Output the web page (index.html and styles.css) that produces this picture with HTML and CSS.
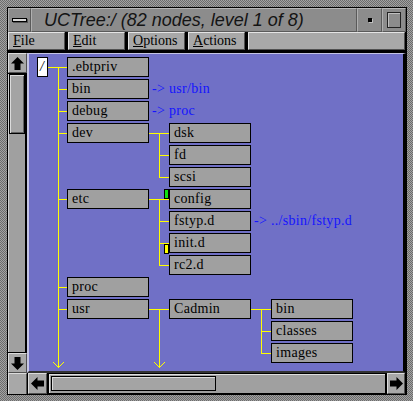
FILE: index.html
```html
<!DOCTYPE html>
<html>
<head>
  <title>UCTree</title>
  <link rel="stylesheet" href="styles.css">
</head>
<body>
  <div class="window">
    <div class="inner">

      <div class="titlebar">
        <div class="tb-btn tb-menu"><span class="bar"></span></div>
        <div class="tb-title">UCTree:/ (82 nodes, level 1 of 8)</div>
        <div class="tb-btn tb-min"><span class="dot"></span></div>
        <div class="tb-btn tb-max"><span class="sq"></span></div>
      </div>

      <div class="menubar">
        <div class="menu"><u>F</u>ile</div>
        <div class="menu"><u>E</u>dit</div>
        <div class="menu"><u>O</u>ptions</div>
        <div class="menu"><u>A</u>ctions</div>
        <div class="menu menu-fill"></div>
      </div>

      <div class="main">
        <div class="vscroll">
          <div class="arrow-btn">
            <svg width="13" height="13" viewBox="0 0 13 13"><path d="M6.5 0 L13 6.5 L9.5 6.5 L9.5 13 L3.5 13 L3.5 6.5 L0 6.5 Z" fill="#000"/></svg>
          </div>
          <div class="vtrough"><div class="vthumb"></div></div>
          <div class="arrow-btn">
            <svg width="13" height="13" viewBox="0 0 13 13"><path d="M6.5 13 L13 6.5 L9.5 6.5 L9.5 0 L3.5 0 L3.5 6.5 L0 6.5 Z" fill="#000"/></svg>
          </div>
        </div>

        <div class="canvas">
          <svg class="lines" width="374" height="317" viewBox="0 0 374 317">
            <g stroke="#ffff00" stroke-width="1" fill="none" shape-rendering="crispEdges">
              <!-- root -->
              <path d="M18 13.5 H29.5 M29.5 13 V314"/>
              <path d="M29.5 13.5 H38 M29.5 35.5 H38 M29.5 57.5 H38 M29.5 79.5 H38 M29.5 145.5 H38 M29.5 233.5 H38 M29.5 255.5 H38"/>
              <path d="M24 308 L29.5 313.5 L35 308" shape-rendering="auto"/>
              <!-- dev -->
              <path d="M120 79.5 H140 M130.5 79 V124 M130.5 101.5 H140 M130.5 123.5 H140"/>
              <!-- etc -->
              <path d="M120 145.5 H140 M130.5 145 V212 M130.5 167.5 H140 M130.5 189.5 H140 M130.5 211.5 H140"/>
              <!-- usr -->
              <path d="M120 255.5 H140 M130.5 255 V314"/>
              <path d="M125 308 L130.5 313.5 L136 308" shape-rendering="auto"/>
              <!-- Cadmin -->
              <path d="M222 255.5 H242 M232.5 255 V300 M232.5 277.5 H242 M232.5 299.5 H242"/>
            </g>
          </svg>

          <div class="node root" style="left:8px;top:3px">/</div>

          <div class="node" style="left:38px;top:3px">.ebtpriv</div>
          <div class="node" style="left:38px;top:25px">bin</div>
          <div class="node" style="left:38px;top:47px">debug</div>
          <div class="node" style="left:38px;top:69px">dev</div>
          <div class="node" style="left:38px;top:135px">etc</div>
          <div class="node" style="left:38px;top:223px">proc</div>
          <div class="node" style="left:38px;top:245px">usr</div>

          <div class="node" style="left:140px;top:69px">dsk</div>
          <div class="node" style="left:140px;top:91px">fd</div>
          <div class="node" style="left:140px;top:113px">scsi</div>
          <div class="node" style="left:140px;top:135px">config</div>
          <div class="node" style="left:140px;top:157px">fstyp.d</div>
          <div class="node" style="left:140px;top:179px">init.d</div>
          <div class="node" style="left:140px;top:201px">rc2.d</div>
          <div class="node" style="left:140px;top:245px">Cadmin</div>

          <div class="node" style="left:242px;top:245px">bin</div>
          <div class="node" style="left:242px;top:267px">classes</div>
          <div class="node" style="left:242px;top:289px">images</div>

          <div class="link" style="left:123px;top:25px">-&gt; usr/bin</div>
          <div class="link" style="left:123px;top:47px">-&gt; proc</div>
          <div class="link" style="left:225px;top:157px">-&gt; ../sbin/fstyp.d</div>

          <div class="marker green" style="left:135px;top:135px"></div>
          <div class="marker yellow" style="left:135px;top:190px"></div>
        </div>
      </div>

      <div class="hscroll">
        <div class="corner"></div>
        <div class="arrow-btn">
          <svg width="13" height="13" viewBox="0 0 13 13"><path d="M0 6.5 L6.5 0 L6.5 3.5 L13 3.5 L13 9.5 L6.5 9.5 L6.5 13 Z" fill="#000"/></svg>
        </div>
        <div class="htrough"><div class="hthumb"></div></div>
        <div class="arrow-btn arrow-right">
          <svg width="13" height="13" viewBox="0 0 13 13"><path d="M13 6.5 L6.5 0 L6.5 3.5 L0 3.5 L0 9.5 L6.5 9.5 L6.5 13 Z" fill="#000"/></svg>
        </div>
      </div>

    </div>
  </div>
</body>
</html>
```

FILE: styles.css
```css
body {
  margin: 0;
  background: #888;
}

.window {
  width: 413px;
  height: 401px;
  box-sizing: border-box;
  padding: 7px 6px 6px 7px;
  background: repeating-conic-gradient(#a2a2a2 0 25%, #6c6c6c 0 50%) 0 0 / 2px 2px;
}

.inner {
  height: 100%;
  box-sizing: border-box;
  border: 1px solid #000;
  background: #000;
  display: flex;
  flex-direction: column;
}

/* title bar */
.titlebar {
  display: flex;
  height: 24px;
  flex: none;
}

.tb-btn,
.tb-title {
  box-sizing: border-box;
  background: #8c8c8c;
  border-top: 1px solid #b8b8b8;
  border-left: 1px solid #b0b0b0;
  border-right: 1px solid #5a5a5a;
  border-bottom: 1px solid #5a5a5a;
  display: flex;
  align-items: center;
}

.tb-menu { width: 23px; justify-content: center; }
.tb-min { width: 25px; justify-content: center; }
.tb-max { width: 24px; justify-content: center; }

.tb-title {
  flex: 1;
  padding-left: 12px;
  font-family: "Liberation Sans", Arial, sans-serif;
  font-style: italic;
  font-size: 18px;
  color: #141414;
}

.bar {
  width: 13px;
  height: 2px;
  background: #d8d8d8;
  border: 1px solid #000;
  box-shadow: 1px 1px 0 #555;
}

.dot {
  width: 4px;
  height: 4px;
  background: #000;
  box-shadow: 1px 1px 0 #c0c0c0;
}

.sq {
  width: 12px;
  height: 14px;
  background: #8c8c8c;
  border: 1px solid #222;
  box-shadow: inset 1px 1px 0 #c0c0c0;
}

/* menu bar */
.menubar {
  display: flex;
  gap: 3px;
  height: 21px;
  flex: none;
  background: #000;
}

.menu {
  width: 57px;
  height: 18px;
  box-sizing: border-box;
  background: #a8a8a8;
  border-top: 1px solid #e4e4e4;
  border-left: 1px solid #e4e4e4;
  border-right: 1px solid #505050;
  border-bottom: 1px solid #505050;
  padding-left: 4px;
  font-family: "Liberation Serif", "Times New Roman", serif;
  font-size: 14px;
  line-height: 16px;
  color: #000;
}

.menu-fill {
  width: 157px;
}

/* main area */
.main {
  display: flex;
  height: 320px;
  flex: none;
}

.vscroll {
  width: 19px;
  display: flex;
  flex-direction: column;
  background: #000;
}

.arrow-btn {
  width: 19px;
  height: 20px;
  box-sizing: border-box;
  background: #a8a8a8;
  border-top: 1px solid #dcdcdc;
  border-left: 1px solid #dcdcdc;
  border-right: 1px solid #505050;
  border-bottom: 1px solid #505050;
  display: flex;
  align-items: center;
  justify-content: center;
  flex: none;
}

.vtrough {
  flex: 1;
  background: #a0a0a0;
  border-left: 1px solid #d0d0d0;
  border-right: 2px solid #000;
  margin: 1px 0;
}

.vthumb {
  height: 58px;
  background: #a4a4a4;
  border: 1px solid #000;
  box-shadow: inset 1px 1px 0 #dcdcdc, inset -1px -1px 0 #606060;
}

.canvas {
  position: relative;
  width: 374px;
  height: 317px;
  background: #7070c6;
  border-top: 1px solid #c4c4e4;
  border-left: 2px solid #c4c4e4;
  border-right: 3px solid #000;
  border-bottom: 2px solid #333;
}

.lines {
  position: absolute;
  left: 0;
  top: 0;
}

.node {
  position: absolute;
  width: 82px;
  height: 20px;
  box-sizing: border-box;
  background: #a0a0a0;
  border: 1px solid #000;
  padding-left: 4px;
  font-family: "Liberation Serif", "Times New Roman", serif;
  font-size: 14px;
  letter-spacing: 0.3px;
  line-height: 18px;
  color: #000;
}

.node.root {
  width: 11px;
  padding-left: 2px;
  background: #fff;
  font-style: italic;
  letter-spacing: 0;
}

.link {
  position: absolute;
  height: 20px;
  line-height: 20px;
  font-family: "Liberation Serif", "Times New Roman", serif;
  font-size: 14px;
  letter-spacing: 0.3px;
  color: #1414ff;
  white-space: nowrap;
}

.marker {
  position: absolute;
  width: 5px;
  height: 10px;
  box-sizing: border-box;
  border: 1px solid #000;
}

.green { background: #10e010; }
.yellow { background: #ffff00; }

/* bottom scrollbar */
.hscroll {
  display: flex;
  gap: 1px;
  height: 21px;
  flex: none;
  background: #000;
}

.hscroll .arrow-btn {
  height: 21px;
}

.corner {
  width: 19px;
  box-sizing: border-box;
  background: #a8a8a8;
  border-top: 1px solid #dcdcdc;
  border-left: 1px solid #dcdcdc;
  border-right: 1px solid #505050;
}

.arrow-right {
  width: 18px;
  margin-right: 1px;
}

.htrough {
  flex: 1;
  background: #a0a0a0;
  border: 1px solid #000;
  box-shadow: inset 1px 1px 0 #e0e0e0;
  padding: 2px 0 0 2px;
}

.hthumb {
  width: 165px;
  height: 15px;
  box-sizing: border-box;
  background: #a4a4a4;
  border: 1px solid #000;
  box-shadow: inset 1px 1px 0 #dcdcdc;
}
```
